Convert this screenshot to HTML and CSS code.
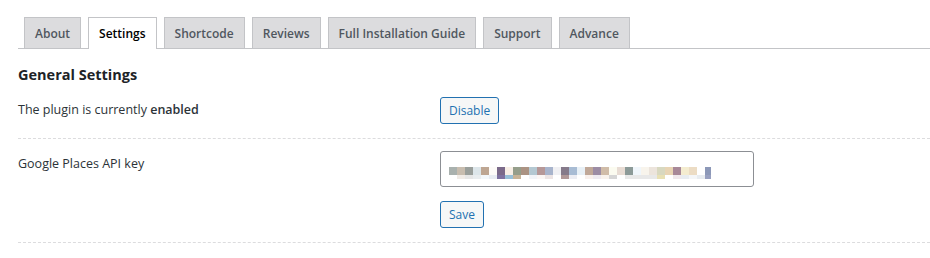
FILE: index.html
```html
<!DOCTYPE html>
<html lang="en">
<head>
    <meta charset="UTF-8">
    <meta name="viewport" content="width=device-width, initial-scale=1.0">
    <title>Plugin Settings</title>
    <link rel="stylesheet" href="styles.css">
</head>
<body>
    <div class="wrap">
        <nav class="nav-tabs">
            <a class="nav-tab" href="#">About</a>
            <a class="nav-tab active" href="#">Settings</a>
            <a class="nav-tab" href="#">Shortcode</a>
            <a class="nav-tab" href="#">Reviews</a>
            <a class="nav-tab" href="#">Full Installation Guide</a>
            <a class="nav-tab" href="#">Support</a>
            <a class="nav-tab" href="#">Advance</a>
        </nav>

        <h2>General Settings</h2>

        <div class="setting-row">
            <div class="setting-label">The plugin is currently <strong>enabled</strong></div>
            <div class="setting-field">
                <button class="button">Disable</button>
            </div>
        </div>

        <div class="setting-row">
            <div class="setting-label label-key">Google Places API key</div>
            <div class="setting-field">
                <div class="key-field">
                    <!-- key is blurred in the screenshot -->
                    <svg width="262" height="12" viewBox="0 0 262 12">
                        <rect x="0" y="0" width="8" height="8" fill="#a9b1ae"/>
                        <rect x="8" y="0" width="8" height="8" fill="#c8bdaf"/>
                        <rect x="16" y="0" width="8" height="8" fill="#9a9f9b"/>
                        <rect x="24" y="0" width="8" height="8" fill="#dde6ea"/>
                        <rect x="32" y="0" width="8" height="8" fill="#bea692"/>
                        <rect x="40" y="0" width="8" height="8" fill="#fdfbf8"/>
                        <rect x="48" y="0" width="8" height="8" fill="#7b6a8a"/>
                        <rect x="56" y="0" width="8" height="8" fill="#f8efe6"/>
                        <rect x="64" y="0" width="8" height="8" fill="#959e8b"/>
                        <rect x="72" y="0" width="8" height="8" fill="#ab9383"/>
                        <rect x="80" y="0" width="8" height="8" fill="#b4c8d2"/>
                        <rect x="88" y="0" width="8" height="8" fill="#b69898"/>
                        <rect x="96" y="0" width="8" height="8" fill="#a8b4cc"/>
                        <rect x="104" y="0" width="8" height="8" fill="#f0f0f3"/>
                        <rect x="112" y="0" width="8" height="8" fill="#857a8a"/>
                        <rect x="120" y="0" width="8" height="8" fill="#a8bcd4"/>
                        <rect x="128" y="0" width="8" height="8" fill="#e8f0f6"/>
                        <rect x="136" y="0" width="8" height="8" fill="#c0a898"/>
                        <rect x="144" y="0" width="8" height="8" fill="#9c8ca4"/>
                        <rect x="152" y="0" width="8" height="8" fill="#d0bca8"/>
                        <rect x="160" y="0" width="8" height="8" fill="#fbfbf0"/>
                        <rect x="168" y="0" width="8" height="8" fill="#e8dcd4"/>
                        <rect x="176" y="0" width="8" height="8" fill="#8c9a98"/>
                        <rect x="184" y="0" width="8" height="8" fill="#f0f6fb"/>
                        <rect x="192" y="0" width="8" height="8" fill="#f8f4ec"/>
                        <rect x="200" y="0" width="8" height="8" fill="#ece4dc"/>
                        <rect x="208" y="0" width="8" height="8" fill="#d8d8c0"/>
                        <rect x="216" y="0" width="8" height="8" fill="#e8d4b4"/>
                        <rect x="224" y="0" width="8" height="8" fill="#a88898"/>
                        <rect x="232" y="0" width="8" height="8" fill="#f4ecd0"/>
                        <rect x="240" y="0" width="8" height="8" fill="#ecdcc4"/>
                        <rect x="256" y="0" width="6" height="8" fill="#8c98b8"/>

                        <rect x="8" y="8" width="8" height="4" fill="#f0ebe6"/>
                        <rect x="16" y="8" width="8" height="4" fill="#e6e6e6"/>
                        <rect x="24" y="8" width="8" height="4" fill="#e9edef"/>
                        <rect x="32" y="8" width="8" height="4" fill="#f3f7fa"/>
                        <rect x="40" y="8" width="8" height="4" fill="#e8ecf2"/>
                        <rect x="48" y="8" width="8" height="4" fill="#7e72a0"/>
                        <rect x="56" y="8" width="8" height="4" fill="#98c0d8"/>
                        <rect x="64" y="8" width="8" height="4" fill="#c8b498"/>
                        <rect x="80" y="8" width="8" height="4" fill="#f2f4f8"/>
                        <rect x="88" y="8" width="8" height="4" fill="#fbf6f4"/>
                        <rect x="96" y="8" width="8" height="4" fill="#ece4e4"/>
                        <rect x="112" y="8" width="8" height="4" fill="#b09898"/>
                        <rect x="120" y="8" width="8" height="4" fill="#ecedf3"/>
                        <rect x="136" y="8" width="8" height="4" fill="#f8f0ec"/>
                        <rect x="144" y="8" width="8" height="4" fill="#eeeaf0"/>
                        <rect x="152" y="8" width="8" height="4" fill="#f8f2ec"/>
                        <rect x="160" y="8" width="8" height="4" fill="#d6d6d6"/>
                        <rect x="176" y="8" width="32" height="4" fill="#e8e8e8"/>
                        <rect x="208" y="8" width="8" height="4" fill="#e8e0b4"/>
                        <rect x="224" y="8" width="8" height="4" fill="#f0e8ec"/>
                        <rect x="232" y="8" width="8" height="4" fill="#e8ecf0"/>
                        <rect x="240" y="8" width="8" height="4" fill="#f4f6f8"/>
                        <rect x="248" y="8" width="8" height="4" fill="#e8ecf0"/>
                        <rect x="256" y="8" width="6" height="4" fill="#98a0c0"/>
                    </svg>
                </div>
                <button class="button">Save</button>
            </div>
        </div>
    </div>
</body>
</html>
```

FILE: styles.css
```css
body {
    margin: 0;
    padding: 17px 0 0 18px;
    font-family: "Open Sans", "Noto Sans", sans-serif;
    font-size: 12.5px;
    color: #1d2327;
    background: #fff;
}

.nav-tabs {
    display: flex;
    align-items: flex-end;
    gap: 7px;
    padding-left: 6px;
    border-bottom: 1px solid #c3c4c7;
}

.nav-tab {
    display: block;
    height: 30px;
    line-height: 32px;
    padding: 0 10px;
    border: 1px solid #c3c4c7;
    border-bottom: none;
    background: #dcdcde;
    color: #50575e;
    font-size: 12px;
    font-weight: 600;
    text-decoration: none;
}

.nav-tab.active {
    background: #fff;
    color: #000;
    height: 31px;
    margin-bottom: -1px;
}

h2 {
    margin: 16px 0 0;
    font-size: 14.5px;
    line-height: 20px;
    font-weight: 700;
    color: #1d2327;
}

.setting-row {
    display: grid;
    grid-template-columns: 422px 1fr;
    padding: 12px 0 14px;
    border-bottom: 1px dashed #dcdcde;
}

.setting-label {
    margin-top: 3px;
    line-height: 20px;
    color: #2c3338;
}

.setting-label strong {
    font-weight: 600;
}

.label-key {
    margin-top: 3px;
}

.setting-field {
    display: flex;
    flex-direction: column;
    align-items: flex-start;
    gap: 14px;
}

.button {
    height: 27px;
    padding: 0 8px;
    border: 1px solid #2271b1;
    border-radius: 3px;
    background: #f6f7f7;
    color: #2271b1;
    font-family: inherit;
    font-size: 12px;
    cursor: pointer;
}

.key-field {
    box-sizing: border-box;
    width: 314px;
    height: 36px;
    padding: 15px 0 0 8px;
    border: 1px solid #8c8f94;
    border-radius: 3px;
    background: #fff;
}

.key-field svg {
    display: block;
}
```
